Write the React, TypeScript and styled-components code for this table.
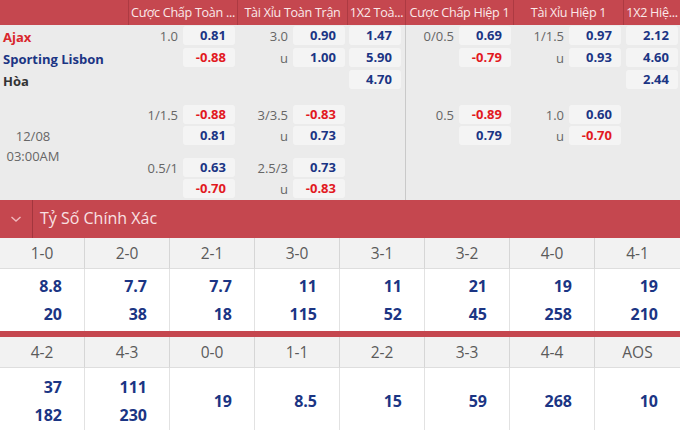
import React from "react";
import styled, { createGlobalStyle } from "styled-components";

const RED = "#c5474f";
const NAVY = "#1b3584";
const ODD_RED = "#e2191f";
const COLS = "128px 109px 110px 58px 108px 110px 1fr";

const Global = createGlobalStyle`
  html, body { margin: 0; padding: 0; background: #ebebeb; }
  body { font-family: "Open Sans", "Noto Sans", sans-serif; overflow: hidden; }
`;

const Page = styled.div`
  width: 680px;
`;

const HeaderRow = styled.div`
  display: grid;
  grid-template-columns: ${COLS};
  height: 25px;
  background: ${RED};
`;

const HeaderCell = styled.div`
  border-left: 1px solid #ad3a42;
  color: #fbe9ea;
  font-size: 12.6px;
  letter-spacing: -0.3px;
  line-height: 25px;
  text-align: center;
  white-space: nowrap;
  overflow: hidden;
  padding: 0 1px;
  &:first-child { border-left: none; }
`;

const MatchBlock = styled.div<{ $h: number }>`
  display: grid;
  grid-template-columns: ${COLS};
  height: ${(p) => p.$h}px;
  background: #ebebeb;
`;

const TeamCol = styled.div`
  padding-top: 1px;
  padding-left: 3px;
`;

const TeamName = styled.div<{ $c: string }>`
  font-size: 13px;
  font-weight: 700;
  line-height: 22px;
  color: ${(p) => p.$c};
  white-space: nowrap;
`;

const DateCol = styled.div`
  width: 66px;
  display: flex;
  flex-direction: column;
  justify-content: center;
  align-items: center;
  color: #666;
  font-size: 13px;
  line-height: 20px;
  padding-bottom: 4px;
`;

const MarketCol = styled.div<{ $pt: number; $gap: number; $pl: number; $pr: number; $sep?: boolean }>`
  display: flex;
  flex-direction: column;
  gap: ${(p) => p.$gap}px;
  padding: ${(p) => p.$pt}px ${(p) => p.$pr}px 0 ${(p) => p.$pl}px;
  border-left: ${(p) => (p.$sep ? "1px solid #c9c9c9" : "none")};
`;

const OddsGroup = styled.div<{ $gap: number }>`
  display: flex;
  flex-direction: column;
  gap: ${(p) => p.$gap}px;
`;

const OddsLine = styled.div`
  display: flex;
  align-items: center;
  height: 19px;
`;

const LineLabel = styled.span`
  flex: 1;
  text-align: right;
  padding-right: 5px;
  color: #666;
  font-size: 13px;
`;

const OddsCell = styled.span<{ $neg: boolean }>`
  width: 52px;
  height: 19px;
  box-sizing: border-box;
  background: #f4f4f4;
  border-radius: 3px;
  text-align: right;
  padding-right: 9px;
  font-size: 13px;
  font-weight: 700;
  line-height: 19px;
  color: ${(p) => (p.$neg ? ODD_RED : NAVY)};
`;

const SectionBar = styled.div`
  display: flex;
  align-items: center;
  height: 38px;
  background: ${RED};
`;

const ChevronBox = styled.div`
  width: 33px;
  height: 100%;
  display: flex;
  align-items: center;
  justify-content: center;
  border-right: 1px solid #a3363e;
  box-sizing: border-box;
`;

const SectionTitle = styled.div`
  padding-left: 7px;
  color: #f9e1e3;
  font-size: 16px;
  padding-bottom: 2px;
`;

const ScoreGrid = styled.div`
  display: grid;
  grid-template-columns: repeat(8, 1fr);
  background: #fff;
`;

const ScoreHead = styled.div`
  height: 31px;
  background: #f2f2f2;
  border-right: 1px solid #d6d6d6;
  border-bottom: 1px solid #dedede;
  box-sizing: border-box;
  color: #5a5a5a;
  font-size: 15.5px;
  line-height: 31px;
  text-align: center;
  &:nth-child(8n) { border-right: none; }
`;

const ScoreVal = styled.div<{ $h: number }>`
  height: ${(p) => p.$h}px;
  display: flex;
  flex-direction: column;
  justify-content: center;
  align-items: flex-end;
  gap: 8px;
  padding-right: 22px;
  border-right: 1px solid #e2e2e2;
  color: ${NAVY};
  font-size: 16px;
  font-weight: 700;
  line-height: 20px;
  &:nth-child(8n) { border-right: none; }
`;

const RedRule = styled.div`
  height: 6px;
  background: ${RED};
`;

type Line = { l?: string; v: string };
type Col = { groups: Line[][]; x12?: boolean; pl?: number; sep?: boolean };

const neg = (v: string) => v.startsWith("-");

const block1: Col[] = [
  { groups: [[{ l: "1.0", v: "0.81" }, { l: "", v: "-0.88" }]] },
  { groups: [[{ l: "3.0", v: "0.90" }, { l: "u", v: "1.00" }]] },
  { groups: [[{ v: "1.47" }, { v: "5.90" }, { v: "4.70" }]], x12: true, pl: 2 },
  { groups: [[{ l: "0/0.5", v: "0.69" }, { l: "", v: "-0.79" }]], sep: true },
  { groups: [[{ l: "1/1.5", v: "0.97" }, { l: "u", v: "0.93" }]] },
  { groups: [[{ v: "2.12" }, { v: "4.60" }, { v: "2.44" }]], x12: true, pl: 3 },
];

const block2: Col[] = [
  {
    groups: [
      [{ l: "1/1.5", v: "-0.88" }, { l: "", v: "0.81" }],
      [{ l: "0.5/1", v: "0.63" }, { l: "", v: "-0.70" }],
    ],
  },
  {
    groups: [
      [{ l: "3/3.5", v: "-0.83" }, { l: "u", v: "0.73" }],
      [{ l: "2.5/3", v: "0.73" }, { l: "u", v: "-0.83" }],
    ],
  },
  { groups: [], x12: true, pl: 2 },
  { groups: [[{ l: "0.5", v: "-0.89" }, { l: "", v: "0.79" }]], sep: true },
  { groups: [[{ l: "1.0", v: "0.60" }, { l: "u", v: "-0.70" }]] },
  { groups: [], x12: true, pl: 3 },
];

const headers = [
  "",
  "Cược Chấp Toàn ...",
  "Tài Xỉu Toàn Trận",
  "1X2 Toà...",
  "Cược Chấp Hiệp 1",
  "Tài Xỉu Hiệp 1",
  "1X2 Hiệ...",
];

const scores1: [string, string[]][] = [
  ["1-0", ["8.8", "20"]],
  ["2-0", ["7.7", "38"]],
  ["2-1", ["7.7", "18"]],
  ["3-0", ["11", "115"]],
  ["3-1", ["11", "52"]],
  ["3-2", ["21", "45"]],
  ["4-0", ["19", "258"]],
  ["4-1", ["19", "210"]],
];

const scores2: [string, string[]][] = [
  ["4-2", ["37", "182"]],
  ["4-3", ["111", "230"]],
  ["0-0", ["19"]],
  ["1-1", ["8.5"]],
  ["2-2", ["15"]],
  ["3-3", ["59"]],
  ["4-4", ["268"]],
  ["AOS", ["10"]],
];

function Markets({ cols, pt, lineGap, groupGap }: { cols: Col[]; pt: number; lineGap: number; groupGap: number }) {
  return (
    <>
      {cols.map((c, i) => (
        <MarketCol key={i} $pt={pt} $gap={groupGap} $pl={c.pl ?? 0} $pr={c.x12 ? 0 : 2} $sep={c.sep}>
          {c.groups.map((g, j) => (
            <OddsGroup key={j} $gap={lineGap}>
              {g.map((ln, k) => (
                <OddsLine key={k}>
                  {!c.x12 && <LineLabel>{ln.l}</LineLabel>}
                  <OddsCell $neg={neg(ln.v)}>{ln.v}</OddsCell>
                </OddsLine>
              ))}
            </OddsGroup>
          ))}
        </MarketCol>
      ))}
    </>
  );
}

function ScoreTable({ rows, valH }: { rows: [string, string[]][]; valH: number }) {
  return (
    <ScoreGrid>
      {rows.map(([k]) => (
        <ScoreHead key={k}>{k}</ScoreHead>
      ))}
      {rows.map(([k, vals]) => (
        <ScoreVal key={k} $h={valH}>
          {vals.map((v, i) => (
            <span key={i}>{v}</span>
          ))}
        </ScoreVal>
      ))}
    </ScoreGrid>
  );
}

export default function App() {
  return (
    <Page>
      <Global />
      <HeaderRow>
        {headers.map((h, i) => (
          <HeaderCell key={i}>{h}</HeaderCell>
        ))}
      </HeaderRow>
      <MatchBlock $h={70}>
        <TeamCol>
          <TeamName $c="#d9262c">Ajax</TeamName>
          <TeamName $c={NAVY}>Sporting Lisbon</TeamName>
          <TeamName $c="#333">Hòa</TeamName>
        </TeamCol>
        <Markets cols={block1} pt={1} lineGap={3} groupGap={0} />
      </MatchBlock>
      <MatchBlock $h={105}>
        <DateCol>
          <span>12/08</span>
          <span>03:00AM</span>
        </DateCol>
        <Markets cols={block2} pt={10} lineGap={2} groupGap={13} />
      </MatchBlock>
      <SectionBar>
        <ChevronBox>
          <svg width="12" height="8" viewBox="0 0 12 8">
            <path d="M1.5 2 L6 6 L10.5 2" fill="none" stroke="#f0b9bd" strokeWidth="1.4" />
          </svg>
        </ChevronBox>
        <SectionTitle>Tỷ Số Chính Xác</SectionTitle>
      </SectionBar>
      <ScoreTable rows={scores1} valH={62} />
      <RedRule />
      <ScoreTable rows={scores2} valH={66} />
    </Page>
  );
}
